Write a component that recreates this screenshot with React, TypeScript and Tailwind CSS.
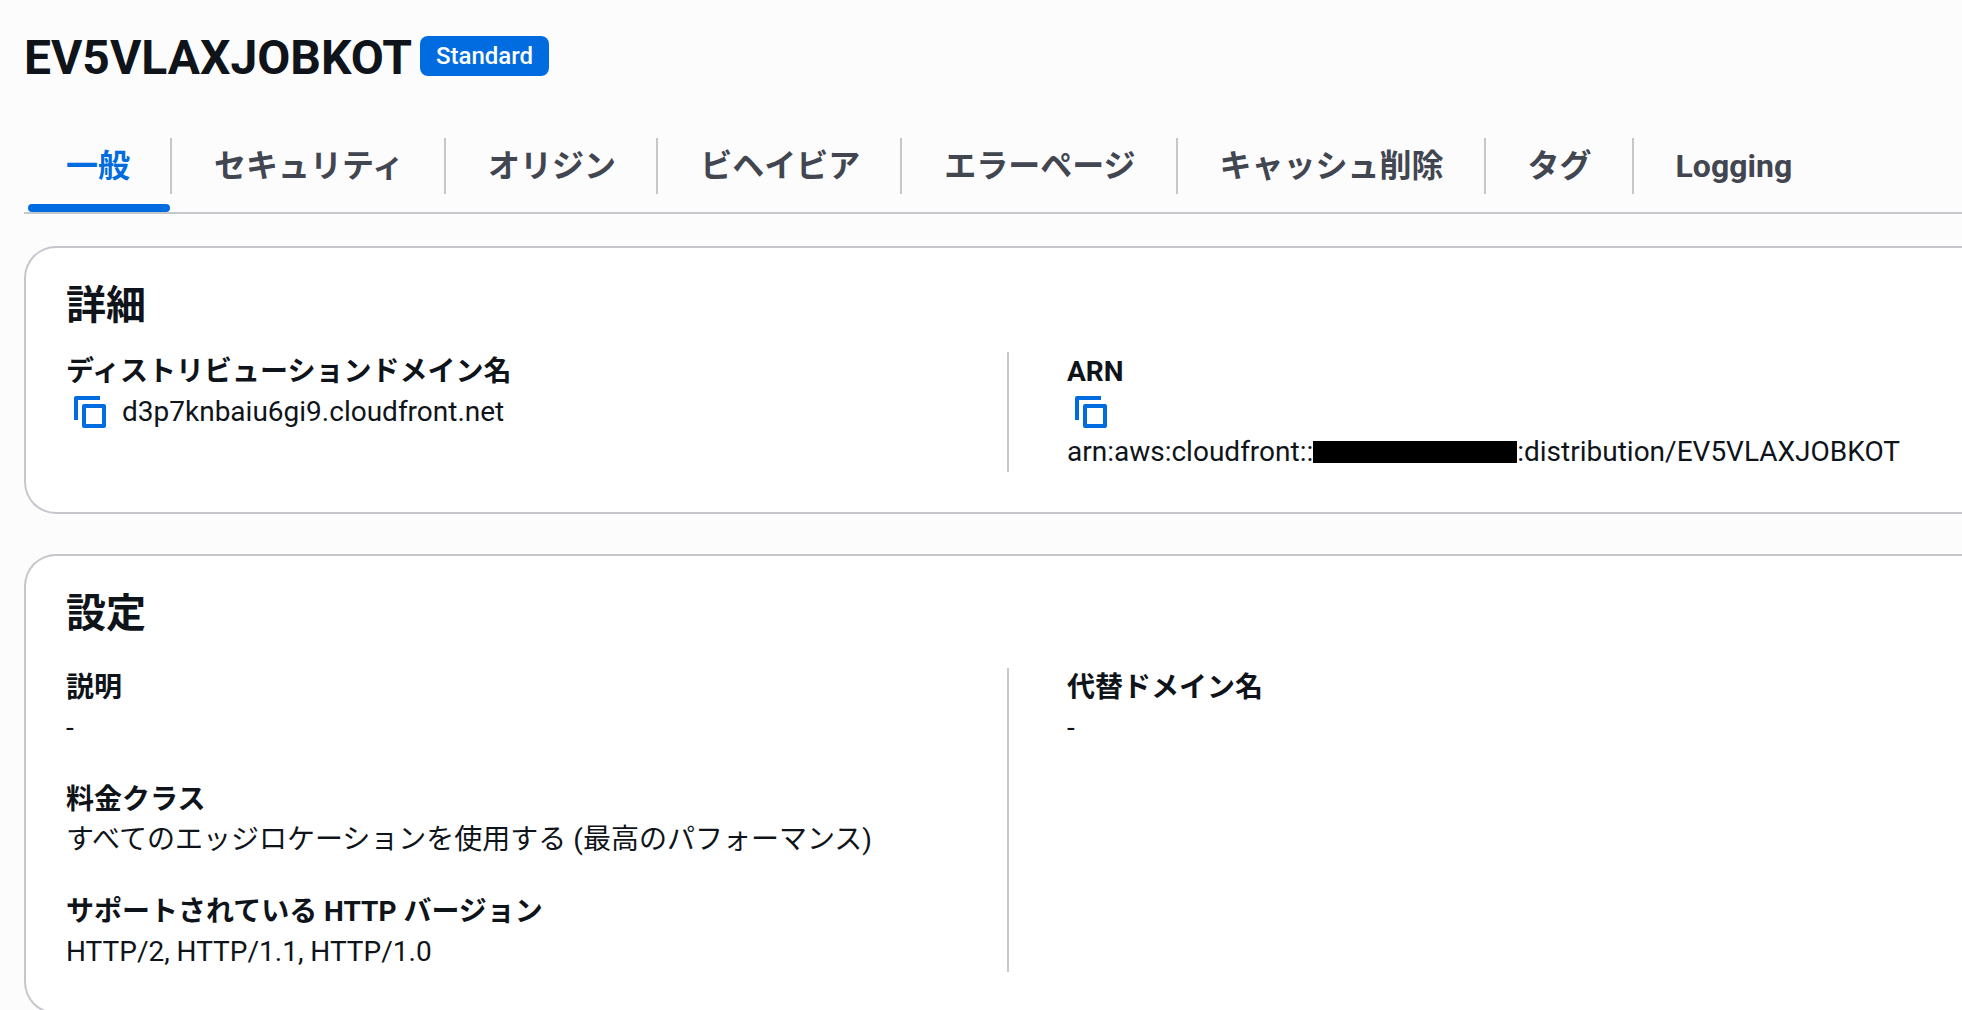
import { ReactNode, useState } from "react";

const TABS = [
  "一般",
  "セキュリティ",
  "オリジン",
  "ビヘイビア",
  "エラーページ",
  "キャッシュ削除",
  "タグ",
  "Logging",
];

function CopyButton({ label }: { label: string }) {
  return (
    <button type="button" aria-label={label} className="flex h-10 items-center px-2 text-[#006ce0]">
      <svg viewBox="0 0 32 32" className="size-8" fill="none" stroke="currentColor" strokeWidth="4" strokeLinejoin="round">
        <path d="M26 2H2v22" />
        <path d="M10 10h20v20H10z" />
      </svg>
    </button>
  );
}

function Field({ label, children }: { label: string; children: ReactNode }) {
  return (
    <div>
      <dt className="h-10 font-bold">{label}</dt>
      <dd>{children}</dd>
    </div>
  );
}

function Panel({ title, className, children }: { title: string; className: string; children: ReactNode }) {
  return (
    <section className="rounded-l-[32px] border-2 border-r-0 border-[#c6c6cd] bg-white pt-8 pr-3.5 pb-10 pl-10">
      <h2 className="h-12 pt-0.5 text-[40px] leading-12 font-bold">{title}</h2>
      <div className={className}>{children}</div>
    </section>
  );
}

export default function App() {
  const [active, setActive] = useState(0);

  return (
    <main className="h-screen overflow-hidden bg-[#fcfcfd] pl-6 font-['Roboto','Noto_Sans_CJK_JP',sans-serif] text-[28px] leading-10 text-[#0f141a]">
      <header className="flex items-center gap-2 pt-6">
        <h1 className="pt-1 text-[48px] leading-15 font-bold">EV5VLAXJOBKOT</h1>
        <span className="rounded-lg bg-[#006ce0] px-4 text-[24px] leading-10 font-medium text-white">Standard</span>
      </header>

      <div role="tablist" className="mt-10 flex border-b-2 border-[#c6c6cd] pl-0.5">
        {TABS.map((tab, i) => (
          <button
            key={tab}
            type="button"
            role="tab"
            aria-selected={i === active}
            onClick={() => setActive(i)}
            className={`flex flex-col pt-2.5 text-[32px] font-bold ${i === active ? "text-[#006ce0]" : "text-[#424650]"}`}
          >
            <span
              className={`h-14 border-[#c6c6cd] leading-14 ${i === 0 ? "px-10" : "pr-10 pl-[42px]"} ${i < TABS.length - 1 ? "border-r-2" : ""}`}
            >
              {tab}
            </span>
            <span className={`mx-0.5 mt-2.5 h-2 self-stretch rounded ${i === active ? "bg-[#006ce0]" : ""}`} />
          </button>
        ))}
      </div>

      <div className="mt-8 flex flex-col gap-10">
        <Panel title="詳細" className="mt-6">
          <dl className="grid grid-cols-2">
            <Field label="ディストリビューションドメイン名">
              <span className="flex items-center gap-2">
                <CopyButton label="ドメイン名をコピー" />
                d3p7knbaiu6gi9.cloudfront.net
              </span>
            </Field>
            <div className="border-l-2 border-[#c6c6cd] pl-[58px]">
              <Field label="ARN">
                <CopyButton label="ARN をコピー" />
                <span className="flex items-center">
                  arn:aws:cloudfront::
                  <span className="h-[22px] w-[204px] bg-black" />
                  :distribution/EV5VLAXJOBKOT
                </span>
              </Field>
            </div>
          </dl>
        </Panel>

        <Panel title="設定" className="mt-8">
          <dl className="grid grid-cols-2">
            <div className="flex flex-col gap-8">
              <Field label="説明">-</Field>
              <Field label="料金クラス">すべてのエッジロケーションを使用する (最高のパフォーマンス)</Field>
              <Field label="サポートされている HTTP バージョン">HTTP/2, HTTP/1.1, HTTP/1.0</Field>
            </div>
            <div className="border-l-2 border-[#c6c6cd] pl-[58px]">
              <Field label="代替ドメイン名">-</Field>
            </div>
          </dl>
        </Panel>
      </div>
    </main>
  );
}
